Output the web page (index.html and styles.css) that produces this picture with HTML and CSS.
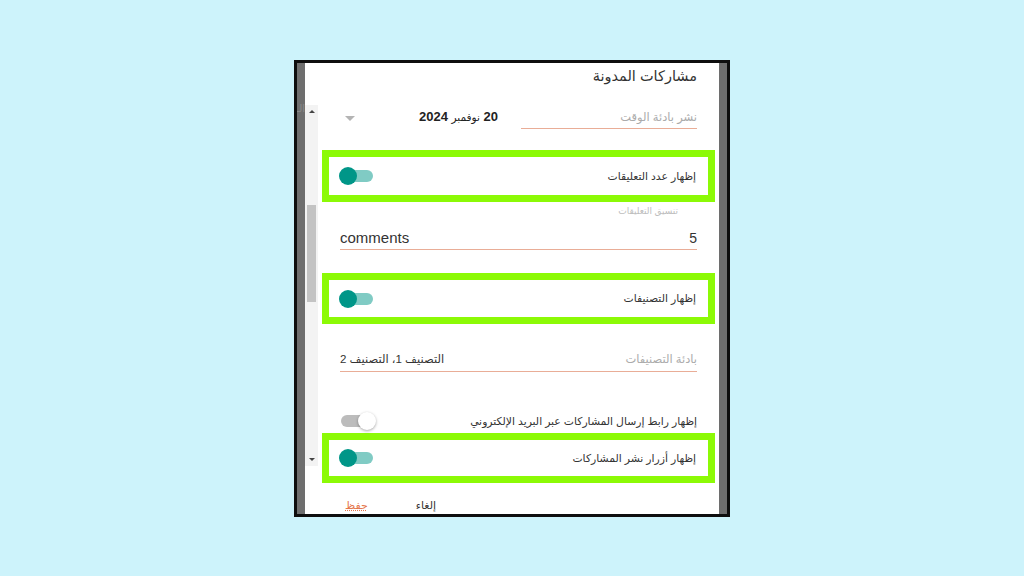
FILE: index.html
```html
<!DOCTYPE html>
<html lang="ar">
<head>
<meta charset="utf-8">
<title>مشاركات المدونة</title>
<link rel="stylesheet" href="styles.css">
</head>
<body>
<div class="frame">
  <div class="strip"></div>
  <div class="content">
    <div class="scrollbar">
      <div class="sb-arrow up"></div>
      <div class="sb-track"><div class="sb-thumb"></div></div>
      <div class="sb-arrow down"></div>
    </div>
    <div class="main" dir="rtl">
      <div class="title">مشاركات المدونة</div>
      <div class="row-time">
        <div class="field field-time"><span class="placeholder">نشر بادئة الوقت</span></div>
        <div class="date"><b>20</b> <span class="month">نوفمبر</span> <b>2024</b></div>
        <div class="dd-arrow"></div>
      </div>
      <div class="hl">
        <span class="opt">إظهار عدد التعليقات</span>
        <span class="switch on"><span class="knob"></span></span>
      </div>
      <div class="label">تنسيق التعليقات</div>
      <div class="field field-comments">
        <span class="num">5</span>
        <span class="latin">comments</span>
      </div>
      <div class="hl hl2">
        <span class="opt">إظهار التصنيفات</span>
        <span class="switch on"><span class="knob"></span></span>
      </div>
      <div class="field field-cats">
        <span class="placeholder">بادئة التصنيفات</span>
        <span class="value">التصنيف 1، التصنيف 2</span>
      </div>
      <div class="plain">
        <span class="opt">إظهار رابط إرسال المشاركات عبر البريد الإلكتروني</span>
        <span class="switch off"><span class="knob"></span></span>
      </div>
      <div class="hl hl3">
        <span class="opt">إظهار أزرار نشر المشاركات</span>
        <span class="switch on"><span class="knob"></span></span>
      </div>
      <div class="footer">
        <span class="btn cancel">إلغاء</span>
        <span class="btn save">حفظ</span>
      </div>
    </div>
  </div>
  <div class="strip"></div>
  <span class="cut">الـ</span>
</div>
</body>
</html>
```
FILE: styles.css
```css
html, body {
  margin: 0;
  padding: 0;
}
body {
  background: #cdf3fb;
  width: 1024px;
  height: 576px;
  overflow: hidden;
  font-family: "Liberation Sans", "DejaVu Sans", sans-serif;
  color: #333;
  padding-top: 60px;
  box-sizing: border-box;
}
.frame {
  position: relative;
  width: 436px;
  height: 457px;
  margin: 0 auto;
  box-sizing: border-box;
  border: 3px solid #0e0e0e;
  display: flex;
  overflow: hidden;
}
.strip {
  width: 8px;
  flex: none;
  background: #6e6e6e;
}
.content {
  flex: 1;
  background: #fff;
  display: flex;
  min-width: 0;
}
.scrollbar {
  width: 13px;
  flex: none;
  margin-top: 42px;
  height: 361px;
  background: #f3f3f3;
  display: flex;
  flex-direction: column;
  align-items: center;
}
.sb-arrow {
  width: 0;
  height: 0;
  border-left: 3px solid transparent;
  border-right: 3px solid transparent;
  margin: 5px 0;
}
.sb-arrow.up { border-bottom: 3px solid #444; }
.sb-arrow.down { border-top: 3px solid #444; }
.sb-track {
  flex: 1;
  width: 100%;
  padding-top: 87px;
  box-sizing: border-box;
}
.sb-thumb {
  width: 9px;
  height: 97px;
  margin: 0 auto;
  background: #c3c3c3;
}
.main {
  flex: 1;
  padding: 0 22px;
  display: flex;
  flex-direction: column;
  min-width: 0;
}
.title {
  font-size: 14.5px;
  line-height: 22px;
  padding-top: 2px;
  height: 40px;
  color: #333;
}
.row-time {
  display: flex;
  align-items: flex-start;
  height: 22px;
  padding-top: 2px;
}
.field {
  display: flex;
  justify-content: space-between;
  align-items: center;
  border-bottom: 1.5px solid #e9ad97;
  line-height: 20px;
  padding-bottom: 1px;
}
.field-time {
  width: 176px;
  flex: none;
}
.placeholder {
  color: #ababab;
  font-size: 11.5px;
}
.date {
  font-size: 13px;
  line-height: 20px;
  margin-right: 23px;
  color: #222;
}
.date b { font-weight: bold; }
.month {
  font-size: 10.5px;
}
.dd-arrow {
  margin-right: auto;
  margin-left: 5px;
  margin-top: 9px;
  width: 0;
  height: 0;
  border-left: 5px solid transparent;
  border-right: 5px solid transparent;
  border-top: 5px solid #b4b4b4;
}
.hl {
  margin: 21px -18px 0;
  border: 7px solid #8cfa06;
  height: 38px;
  padding: 0 12px 0 11px;
  display: flex;
  align-items: center;
  justify-content: space-between;
}
.hl2 {
  margin-top: 23px;
  height: 37px;
}
.hl3 {
  margin-top: 0;
  height: 36px;
}
.opt {
  font-size: 10.8px;
  color: #333;
}
.label {
  font-size: 9px;
  color: #bdbdbd;
  line-height: 12px;
  margin-top: 3px;
  padding-right: 19px;
}
.field-comments {
  margin-top: 11px;
}
.latin {
  font-family: "Liberation Sans", Arial, sans-serif;
  font-size: 15px;
  color: #333;
}
.num {
  font-size: 14px;
}
.field-cats {
  margin-top: 25px;
  padding-bottom: 2px;
}
.value {
  font-size: 11.5px;
  color: #333;
}
.plain {
  margin-top: 37px;
  height: 24px;
  display: flex;
  align-items: center;
  justify-content: space-between;
}
.switch {
  position: relative;
  width: 32px;
  height: 12px;
  border-radius: 6px;
  margin-left: 1px;
  flex: none;
}
.switch.on { background: #80cbc4; }
.switch.off { background: #bcbcbc; }
.knob {
  position: absolute;
  top: -3px;
  width: 18px;
  height: 18px;
  border-radius: 50%;
}
.switch.on .knob {
  left: -2px;
  background: #009688;
}
.switch.off .knob {
  right: -3px;
  background: #fff;
  box-shadow: 0 1px 3px rgba(0,0,0,0.35);
}
.footer {
  margin-top: 13px;
  display: flex;
  justify-content: flex-end;
  gap: 48px;
  padding-left: 5px;
  line-height: 18px;
}
.btn {
  font-size: 11px;
}
.cancel { color: #333; }
.save {
  color: #e5764c;
  text-decoration: underline dotted;
}
.cut {
  position: absolute;
  left: 0;
  top: 40px;
  font-size: 10px;
  color: #8a8a8a;
  width: 8px;
  overflow: hidden;
  white-space: nowrap;
  direction: rtl;
}
```
